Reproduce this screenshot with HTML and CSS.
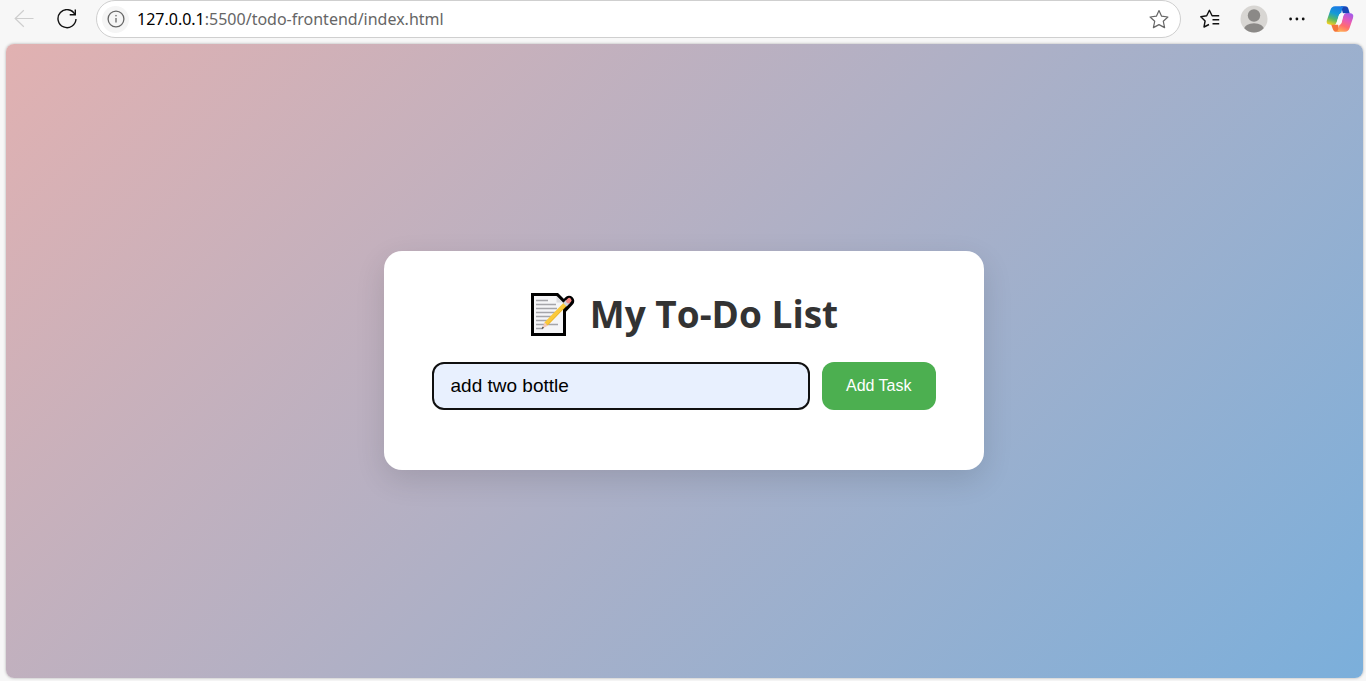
FILE: index.html
```html
<!DOCTYPE html>
<html lang="en">
<head>
<meta charset="utf-8">
<meta name="viewport" content="width=device-width, initial-scale=1">
<title>My To-Do List</title>
<link rel="stylesheet" href="styles.css">
</head>
<body>
<header class="toolbar">
  <button class="tool back" type="button" aria-label="Back" disabled>
    <svg width="20" height="20" viewBox="0 0 20 20" fill="none" stroke="#cecece" stroke-width="1.2"><path d="M19.500 9.500H1M9.800 1.300 1.200 9.500l8.600 8.200"/></svg>
  </button>
  <button class="tool" type="button" aria-label="Refresh">
    <svg width="20" height="20" viewBox="0 0 20 20" fill="none" stroke="#111" stroke-width="1.4"><path d="M18 5.500A9 9 0 1 0 19 10"/><path d="M18.300.5v5.300h-5.600"/></svg>
  </button>
  <div class="address">
    <button class="info" type="button" aria-label="Site information">
      <svg width="18" height="18" viewBox="0 0 18 18" fill="none" stroke="#666" stroke-width="1.300"><circle cx="9" cy="9" r="7.900"/><path d="M9 8v4.500"/><circle cx="9" cy="5.700" r=".5" fill="#666" stroke-width=".6"/></svg>
    </button>
    <p class="url"><span class="host">127.0.0.1</span>:5500/todo-frontend/index.html</p>
    <button class="tool" type="button" aria-label="Add to favorites">
      <svg width="20" height="20" viewBox="0 0 20 20" fill="none" stroke="#666" stroke-width="1.2" stroke-linejoin="round"><path d="M10 1.500l2.600 5.700 6.300.8-4.600 4.300 1.300 6.300L10 15.600l-5.600 3 1.300-6.300L1.100 8l6.300-.8z"/></svg>
    </button>
  </div>
  <nav class="actions" aria-label="Browser tools">
    <button class="tool" type="button" aria-label="Favorites">
      <svg width="20" height="20" viewBox="0 0 20 20" fill="none" stroke="#111" stroke-width="1.4" stroke-linejoin="round"><path d="M9 15.500 4 18l1.100-6L.8 7.700l5.900-.9L9.400 1.300l2.700 5.500h2.500M12 6.800h7.200M12.500 10.800h6.700M12.500 14.800h6.700"/></svg>
    </button>
    <button class="tool" type="button" aria-label="Profile">
      <svg width="28" height="28" viewBox="0 0 28 28"><defs><clipPath id="disc"><circle cx="14" cy="14" r="13.500"/></clipPath></defs><circle cx="14" cy="14" r="13.500" fill="#d8d6d3"/><g clip-path="url(#disc)" fill="#8b8987"><circle cx="14" cy="10.500" r="6.200"/><ellipse cx="14" cy="24.500" rx="10" ry="6.300"/></g></svg>
    </button>
    <button class="tool" type="button" aria-label="More">
      <svg width="18" height="18" viewBox="0 0 18 18" fill="#111"><circle cx="2.600" cy="9" r="1.400"/><circle cx="8.900" cy="9" r="1.400"/><circle cx="15.200" cy="9" r="1.400"/></svg>
    </button>
    <button class="tool" type="button" aria-label="Copilot">
      <svg width="28" height="28" viewBox="0 0 28 28">
        <defs>
          <linearGradient id="cool" x1=".6" y1="0" x2=".25" y2="1"><stop offset="0" stop-color="#1a78e6"/><stop offset=".4" stop-color="#149bd5"/><stop offset=".7" stop-color="#58b866"/><stop offset="1" stop-color="#f2d020"/></linearGradient>
          <linearGradient id="warm" x1=".75" y1="0" x2=".35" y2="1"><stop offset="0" stop-color="#a45bea"/><stop offset=".4" stop-color="#e85bb4"/><stop offset=".7" stop-color="#ff6d6d"/><stop offset="1" stop-color="#ffac56"/></linearGradient>
        </defs>
        <path d="M15 1.200h4c2.200 0 3 1.100 3.600 3.200l1.200 4.400H17z" fill="#1746b5"/>
        <path d="M12 19H5l1.800 4.900c.7 2 1.700 2.900 3.700 2.900h3z" fill="#f5753a"/>
        <path d="M9 1.200h9.800c-1.300.3-2.100 1.200-2.600 2.800L15.200 8c-1.400.5-2 1.500-2.500 3l-2 6.300c-.6 1.900-1.500 2.500-3.500 2.500H4.400c-3.200 0-4.300-1.600-3.400-4.700L4.500 4.700C5.200 2.400 6.700 1.200 9 1.200z" fill="url(#cool)"/>
        <path d="M20 8.200h3.600c3.200 0 4.300 1.600 3.400 4.700l-3.500 10.400c-.7 2.300-2.200 3.500-4.500 3.500H9.800c1.300-.3 2.100-1.200 2.600-2.800l1-4c1.400-.5 2-1.500 2.500-3l1.100-5.800c.5-2 1.400-3 3-3z" fill="url(#warm)"/>
        <path d="M14.800 8.200H20c-1.600.4-2.300 1.500-2.800 3.200l-1.800 5.600c-.5 1.800-1.400 2.800-3 2.800H8.200c1.300-.2 2-1 2.500-2.500l2-6.300c.4-1.400 1-2.300 2.100-2.800z" fill="#fafafa"/>
      </svg>
    </button>
  </nav>
</header>
<main class="page">
  <section class="card">
    <h1 class="title">
      <svg class="memo" width="46" height="46" viewBox="0 0 46 46" aria-hidden="true">
        <path d="M2 2h27l8 8v35H2z" fill="#000"/>
        <path d="M40 10 32 18.500" stroke="#000" stroke-width="10.500" stroke-linecap="round"/>
        <path d="M5 5h22.500l6.500 6.500V42H5z" fill="#f5f5f7"/>
        <path d="M27.500 5v6.500H34z" fill="#dcdce0"/>
        <path d="M7 9.500h12M7 13.500h20M7 17.500h21M7 21.500h20M7 25.500h17M7 29.500h14M7 33.500h22M7 37.500h7" stroke="#a5a5aa" stroke-width="1.400"/>
        <path d="M37 12.500 17 33" stroke="#fbc93b" stroke-width="4.600"/>
        <path d="M38.200 13.700 18.200 34.200" stroke="#edb62e" stroke-width="1"/>
        <path d="M35.800 13.800 39 10.500" stroke="#cfd2d8" stroke-width="5"/>
        <path d="M39.400 10.100l.8-.8" stroke="#f58a84" stroke-width="4.600" stroke-linecap="round"/>
        <path d="M15.400 31.400l3.400 3.300-5.400 2.700z" fill="#f5c8b5"/><path d="M12.500 37.900l1.200-2.400 1.400 1.400z" fill="#444"/>
      </svg>
      <span>My To-Do List</span>
    </h1>
    <form class="entry">
      <input class="task" type="text" aria-label="Task" value="add two bottle">
      <button class="add" type="button">Add Task</button>
    </form>
  </section>
</main>
</body>
</html>
```
FILE: styles.css
```css
* {
  box-sizing: border-box;
}

body {
  display: flex;
  flex-direction: column;
  min-height: 100vh;
  margin: 0;
  background: #f7f7f7;
  font-family: "Open Sans", "Noto Sans", sans-serif;
}

button {
  padding: 0;
  border: 0;
  background: none;
}

svg {
  display: block;
  flex: none;
}

.toolbar {
  display: flex;
  align-items: center;
  gap: 19px;
  height: 38px;
  padding: 0 12px 0 14px;
}

.tool {
  display: flex;
  flex: none;
}

.back {
  margin-right: 4px;
}

.address {
  display: flex;
  flex: 1;
  align-items: center;
  gap: 8px;
  min-width: 0;
  height: 38px;
  padding: 0 11px 0 5px;
  border: 1px solid #cfcfcf;
  border-radius: 19px;
  background: #fff;
}

.info {
  display: grid;
  flex: none;
  place-items: center;
  width: 27px;
  height: 27px;
  border-radius: 50%;
  background: #f5f5f5;
}

.url {
  flex: 1;
  min-width: 0;
  margin: 0;
  overflow: hidden;
  color: #666;
  font-family: "Noto Sans", "Open Sans", sans-serif;
  font-size: 16px;
  line-height: 24px;
  white-space: nowrap;
}

.host {
  color: #000;
}

.actions {
  display: flex;
  align-items: center;
  gap: 20px;
}

.page {
  display: flex;
  flex: 1;
  align-items: center;
  justify-content: center;
  margin: 6px 3px 3px 6px;
  padding: 0 2px 2px 0;
  border-radius: 8px;
  background: linear-gradient(135deg, #e1b1b1, #7bafdb);
  box-shadow: 0 0 3px rgba(0, 0, 0, 0.3);
}

.card {
  width: 100%;
  max-width: 600px;
  padding: 35px 48px 60px;
  border-radius: 18px;
  background: #fff;
  box-shadow: 0 10px 30px rgba(0, 0, 0, 0.12);
}

.title {
  display: flex;
  align-items: center;
  justify-content: center;
  gap: 15px;
  margin: 0 0 20px;
  color: #333;
  font-size: 37px;
  font-weight: 700;
  line-height: 56px;
}

.entry {
  display: flex;
  gap: 12px;
}

.task {
  flex: 1;
  min-width: 0;
  height: 48px;
  padding: 0 17px;
  border: 2px solid #101010;
  border-radius: 12px;
  background: #e8f0fe;
  color: #000;
  font-family: "Liberation Sans", sans-serif;
  font-size: 19px;
}

.add {
  height: 48px;
  padding: 0 24px;
  border-radius: 12px;
  background: #4caf50;
  color: #fff;
  font-family: "Liberation Sans", sans-serif;
  font-size: 16px;
}
```
